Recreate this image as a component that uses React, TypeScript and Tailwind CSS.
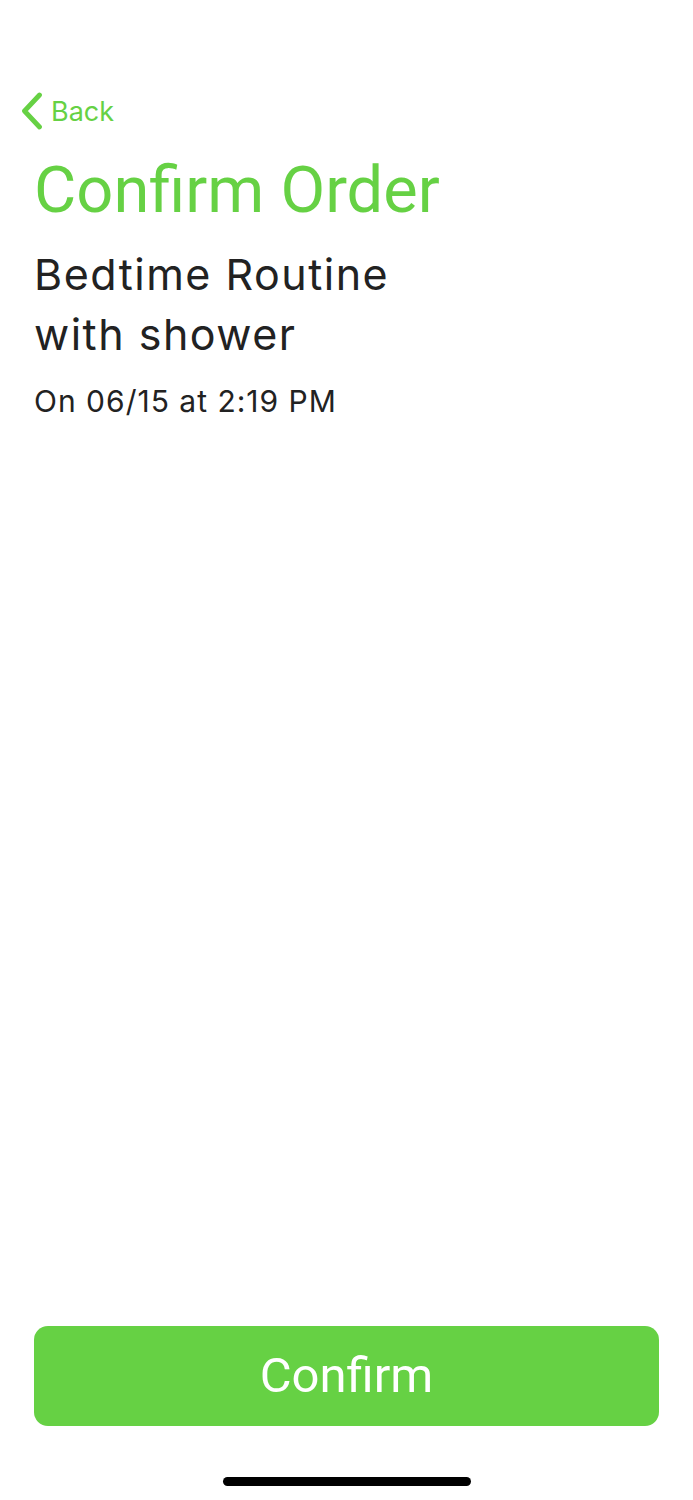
import React from "react";

export default function App() {
  return (
    <div
      className="w-[693px] h-[1500px] bg-white flex flex-col"
      style={{ fontFamily: "Inter, 'Noto Sans', sans-serif" }}
    >
      {/* Header */}
      <div className="pt-[92px] pl-[21px] flex items-center gap-[8px] text-[#66d144]">
        <svg width="22" height="38" viewBox="0 0 22 38" fill="none">
          <path
            d="M18.5 3L3.5 19L18.5 35"
            stroke="currentColor"
            strokeWidth="4.8"
            strokeLinecap="round"
            strokeLinejoin="round"
          />
        </svg>
        <span className="text-[27px] leading-none">Back</span>
      </div>

      <div className="px-[34px]">
        <h1
          className="mt-[20px] text-[65px] leading-[80px] text-[#66d144]"
          style={{ fontFamily: "Roboto, sans-serif" }}
        >
          Confirm Order
        </h1>
        <p className="mt-[14px] text-[43px] leading-[60px] tracking-[1.5px] text-[#222222] w-[400px]">
          Bedtime Routine with shower
        </p>
        <p className="mt-[17px] text-[30px] leading-[40px] tracking-[1px] text-[#222222]">
          On 06/15 at 2:19 PM
        </p>
      </div>

      <div className="flex-1" />

      {/* Footer */}
      <div className="px-[34px]">
        <button
          className="w-full h-[100px] rounded-[14px] bg-[#66d144] text-white text-[49px]"
          style={{ fontFamily: "Roboto, sans-serif" }}
        >
          Confirm
        </button>
      </div>
      <div className="flex justify-center pt-[51px] pb-[14px]">
        <div className="w-[248px] h-[9px] rounded-full bg-black" />
      </div>
    </div>
  );
}
